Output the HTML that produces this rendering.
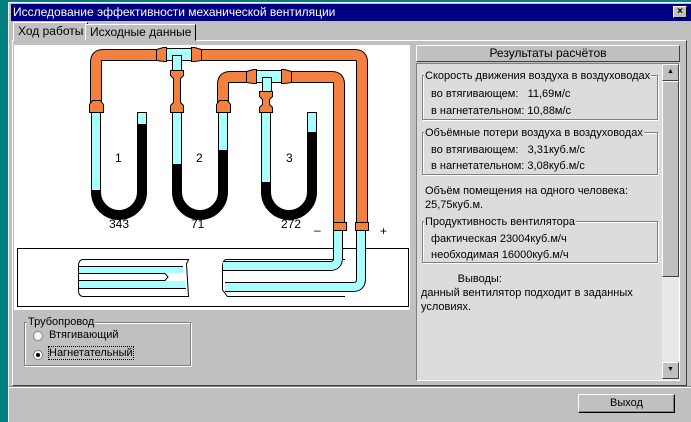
<!DOCTYPE html>
<html><head><meta charset="utf-8"><style>
*{margin:0;padding:0;box-sizing:border-box}
body{width:691px;height:422px;background:#008080;position:relative;overflow:hidden;font-family:"Liberation Sans",sans-serif;font-size:11px;color:#000}
.a{position:absolute}
.win{left:8px;top:2px;width:683px;height:420px;background:#c0c0c0;border-left:1px solid #fff;border-top:1px solid #fff}
.title{left:11px;top:4px;width:680px;height:17px;background:#000080;color:#fff;font-size:12px;line-height:17px;padding-left:2px}
.close{right:4px;top:2px;width:14px;height:12px;background:#c0c0c0;border:1px solid;border-color:#fff #000 #000 #fff;color:#000;font-size:10px;line-height:10px;text-align:center;font-weight:bold}
.tab{border:1px solid;border-color:#fff #000 transparent #fff;background:#c0c0c0;height:19px;line-height:17px;padding:0 4px;font-size:12px}
.page{left:12px;top:40px;width:675px;height:346px;border:1px solid;border-color:#fff #404040 #404040 #fff}
.grp{border:1px solid #808080;box-shadow:1px 1px 0 #fff inset,1px 1px 0 #fff}
.lg{background:#dcdcdc;padding:0 1px;position:absolute;top:-7px;left:2px;font-size:11px}
.t{font-size:11px;line-height:17px}
</style></head><body>
<div class="a win"></div>
<div class="a title">Исследование эффективности механической вентиляции<div class="a close">×</div></div>
<div class="a page"></div>
<div class="a tab" style="left:13px;top:22px;height:19px;border-bottom:none">Ход работы</div>
<div class="a tab" style="left:85px;top:24px;height:17px;line-height:15px">Исходные данные</div>
<div class="a" style="left:14px;top:45px;width:396px;height:265px;background:#fff"></div>
<svg class="a" style="left:0;top:0" width="691" height="422">
<g fill="none" stroke-linecap="butt">
<!-- U tubes black -->
<path d="M96 112 V192 A23 23 0 0 0 142 192 V112" stroke="#000" stroke-width="10"/>
<path d="M177 112 V192 A23 23 0 0 0 223 192 V112" stroke="#000" stroke-width="10"/>
<path d="M266 112 V192 A23 23 0 0 0 312 192 V112" stroke="#000" stroke-width="10"/>
</g>
<g fill="#aff" stroke="#000" stroke-width="1">
<rect x="91.5" y="112.5" width="9" height="78"/>
<rect x="137.5" y="112.5" width="9" height="12"/>
<rect x="172.5" y="112.5" width="9" height="52"/>
<rect x="218.5" y="112.5" width="9" height="38"/>
<rect x="261.5" y="112.5" width="9" height="70"/>
<rect x="307.5" y="112.5" width="9" height="20"/>
<rect x="165.5" y="48.5" width="28" height="12"/>
<rect x="172.5" y="55.5" width="9" height="15"/>
<rect x="255.5" y="70.5" width="27" height="12"/>
<rect x="262.5" y="77.5" width="9" height="14"/>
</g>
<g fill="none">
<path d="M96 108 V62 Q96 55 103 55 H162 M197 55 H355 Q362 55 362 62 V225" stroke="#000" stroke-width="12"/>
<path d="M96 108 V62 Q96 55 103 55 H162 M197 55 H355 Q362 55 362 62 V225" stroke="#f48040" stroke-width="10"/>
<path d="M223 108 V84 Q223 77 230 77 H252 M286 77 H332 Q339 77 339 84 V225" stroke="#000" stroke-width="12"/>
<path d="M223 108 V84 Q223 77 230 77 H252 M286 77 H332 Q339 77 339 84 V225" stroke="#f48040" stroke-width="10"/>
</g>
<g fill="#f48040" stroke="#000">
<path d="M89.5 104.5 L92.5 100.5 H100.5 L103.5 104.5 V112.5 H89.5Z"/>
<path d="M216.5 104.5 L219.5 100.5 H227.5 L230.5 104.5 V112.5 H216.5Z"/>
<path d="M156.5 49.5 L163.5 47.5 H166.5 V61.5 H163.5 L156.5 60.5Z"/>
<path d="M201.5 49.5 L194.5 47.5 H191.5 V61.5 H194.5 L201.5 60.5Z"/>
<path d="M246.5 71.5 L253.5 69.5 H256.5 V83.5 H253.5 L246.5 82.5Z"/>
<path d="M291.5 71.5 L284.5 69.5 H281.5 V83.5 H284.5 L291.5 82.5Z"/>
<path d="M170.5 70.5 H183.5 V75.5 L180.5 78.5 V102.5 L183.5 105.5 V112.5 H170.5 V105.5 L173.5 102.5 V78.5 L170.5 75.5Z"/>
<path d="M259.5 91.5 H272.5 V96.5 L269.5 99.5 V104.5 L272.5 107.5 V112.5 H259.5 V107.5 L262.5 104.5 V99.5 L259.5 96.5Z"/>
<rect x="333.5" y="222.5" width="13" height="8"/>
<rect x="355.5" y="222.5" width="13" height="8"/>
</g>
<rect x="17.5" y="248.5" width="391" height="58" fill="#fff" stroke="#000"/>
<path d="M83.5 259.5 H188.5 L186.5 264 L188.5 296.5 H83.5 Q78.5 296.5 78.5 290 V266 Q78.5 259.5 83.5 259.5Z" fill="#fff" stroke="#000"/>
<rect x="79" y="266" width="104" height="7" fill="#aff"/><rect x="79" y="281" width="106" height="8" fill="#aff"/>
<path d="M79 273.5 H165 L168 277 L165 280.5 H79 M79 266.5 H183 M79 288.5 H186" stroke="#000" fill="none"/>
<path d="M226.5 259.5 H345 M222.5 268 Q222.5 259.5 226.5 259.5 M222.5 268 V290 L227.5 296.5 H345" fill="none" stroke="#000"/>
<path d="M338 231 V258 Q338 266 330 266 H223" stroke="#000" stroke-width="10" fill="none"/>
<path d="M338 231 V258 Q338 266 330 266 H223" stroke="#aff" stroke-width="8" fill="none"/>
<path d="M361 231 V279 Q361 287 353 287 H225" stroke="#000" stroke-width="10" fill="none"/>
<path d="M361 231 V279 Q361 287 353 287 H225" stroke="#aff" stroke-width="8" fill="none"/>
<g font-family="Liberation Sans" font-size="12" fill="#000">
<text x="115" y="162">1</text><text x="196" y="162">2</text><text x="286" y="162">3</text>
<text x="109" y="228">343</text><text x="191" y="228">71</text><text x="281" y="228">272</text>
<text x="314" y="234">–</text><text x="380" y="235">+</text>
</g>
</svg>
<div class="a grp" style="left:24px;top:322px;width:167px;height:44px;border-color:#808080"><span class="lg" style="background:#c0c0c0">Трубопровод</span>
<div class="a" style="left:8px;top:8px;width:10px;height:10px;border-radius:50%;background:#fff;border:1px solid #808080"></div><span class="a" style="left:24px;top:6px">Втягивающий</span>
<div class="a" style="left:8px;top:27px;width:10px;height:10px;border-radius:50%;background:#fff;border:1px solid #808080"><div class="a" style="left:2px;top:2px;width:4px;height:4px;background:#000;border-radius:50%"></div></div><span class="a" style="left:24px;top:24px;outline:1px dotted #000">Нагнетательный</span></div>
<div class="a" style="left:416px;top:45px;width:264px;height:17px;background:#c0c0c0;border:1px solid;border-color:#fff #404040 #404040 #fff;text-align:center;line-height:15px;font-size:12px">Результаты расчётов</div>
<div class="a" style="left:416px;top:63px;width:264px;height:318px;background:#dcdcdc;border:1px solid;border-color:#808080 #fff #fff #808080"></div>
<div class="a" style="left:662px;top:64px;width:17px;height:316px;background:#e8e8e8"></div>
<div class="a" style="left:662px;top:64px;width:17px;height:17px;background:#c0c0c0;border:1px solid;border-color:#fff #404040 #404040 #fff;font-size:7px;text-align:center;line-height:14px">▲</div>
<div class="a" style="left:662px;top:81px;width:17px;height:196px;background:#c0c0c0;border:1px solid;border-color:#fff #404040 #404040 #fff"></div>
<div class="a" style="left:662px;top:362px;width:17px;height:17px;background:#c0c0c0;border:1px solid;border-color:#fff #404040 #404040 #fff;font-size:7px;text-align:center;line-height:14px">▼</div>
<div class="a grp t" style="left:422px;top:75px;width:236px;height:45px"><span class="lg" style="top:-8px;left:1px">Скорость движения воздуха в воздуховодах</span><div class="a" style="left:8px;top:10px">во втягивающем:&nbsp;&nbsp; 11,69м/с</div><div class="a" style="left:8px;top:27px">в нагнетательном: 10,88м/с</div></div>
<div class="a grp t" style="left:422px;top:132px;width:236px;height:43px"><span class="lg" style="top:-8px;left:1px">Объёмные потери воздуха в воздуховодах</span><div class="a" style="left:8px;top:9px">во втягивающем:&nbsp;&nbsp; 3,31куб.м/с</div><div class="a" style="left:8px;top:25px">в нагнетательном: 3,08куб.м/с</div></div>
<div class="a" style="left:425px;top:184px;line-height:14px">Объём помещения на одного человека:<br>25,75куб.м.</div>
<div class="a grp t" style="left:422px;top:221px;width:236px;height:42px"><span class="lg" style="top:-8px;left:1px">Продуктивность вентилятора</span><div class="a" style="left:8px;top:9px">фактическая 23004куб.м/ч</div><div class="a" style="left:8px;top:25px">необходимая 16000куб.м/ч</div></div>
<div class="a" style="left:421px;top:272px;line-height:14px">&nbsp;&nbsp;&nbsp;&nbsp;&nbsp;&nbsp;&nbsp;&nbsp;&nbsp;&nbsp;&nbsp; Выводы:<br>данный вентилятор подходит в заданных<br>условиях.</div>
<div class="a" style="left:9px;top:386px;width:682px;height:2px;border-top:1px solid #808080;border-bottom:1px solid #fff"></div>
<div class="a" style="left:578px;top:394px;width:97px;height:19px;background:#c0c0c0;border:1px solid;border-color:#fff #000 #000 #fff;box-shadow:inset -1px -1px 0 #808080;text-align:center;line-height:17px">Выход</div>
</body></html>
